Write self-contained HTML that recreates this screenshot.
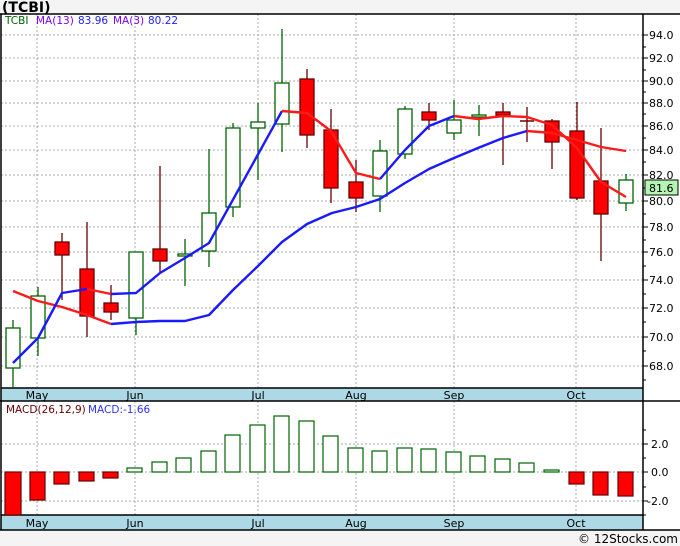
<!DOCTYPE html>
<html><head><meta charset="utf-8"><style>
html,body{margin:0;padding:0;background:#f4f4f4;}
svg{display:block;font-family:"DejaVu Sans","Liberation Sans",sans-serif;}
</style></head><body>
<svg width="680" height="546" viewBox="0 0 680 546" xmlns="http://www.w3.org/2000/svg">
<rect x="0" y="0" width="680" height="546" fill="#f4f4f4"/>
<text x="2" y="12" font-size="14" font-weight="bold" fill="#000" font-family="DejaVu Sans, sans-serif">(TCBI)</text>
<rect x="1" y="14" width="679" height="516" fill="#fff"/>
<rect x="1" y="388" width="642" height="13" fill="#add8e6"/>
<rect x="1" y="515" width="642" height="15" fill="#add8e6"/>
<g stroke="#aaa" stroke-width="1" stroke-dasharray="2,2">
<line x1="1" y1="35" x2="643" y2="35"/><line x1="1" y1="58" x2="643" y2="58"/><line x1="1" y1="81" x2="643" y2="81"/><line x1="1" y1="103" x2="643" y2="103"/><line x1="1" y1="126" x2="643" y2="126"/><line x1="1" y1="150" x2="643" y2="150"/><line x1="1" y1="175" x2="643" y2="175"/><line x1="1" y1="201" x2="643" y2="201"/><line x1="1" y1="227" x2="643" y2="227"/><line x1="1" y1="252" x2="643" y2="252"/><line x1="1" y1="280" x2="643" y2="280"/><line x1="1" y1="308" x2="643" y2="308"/><line x1="1" y1="337" x2="643" y2="337"/><line x1="1" y1="366" x2="643" y2="366"/>
<line x1="1" y1="444" x2="643" y2="444"/><line x1="1" y1="472" x2="643" y2="472"/><line x1="1" y1="501" x2="643" y2="501"/>
<line x1="37" y1="14" x2="37" y2="388"/><line x1="135" y1="14" x2="135" y2="388"/><line x1="258" y1="14" x2="258" y2="388"/><line x1="356" y1="14" x2="356" y2="388"/><line x1="454" y1="14" x2="454" y2="388"/><line x1="576" y1="14" x2="576" y2="388"/>
<line x1="37" y1="401" x2="37" y2="515"/><line x1="135" y1="401" x2="135" y2="515"/><line x1="258" y1="401" x2="258" y2="515"/><line x1="356" y1="401" x2="356" y2="515"/><line x1="454" y1="401" x2="454" y2="515"/><line x1="576" y1="401" x2="576" y2="515"/>
</g>
<g stroke="#000" stroke-width="1.5" fill="none">
<line x1="0" y1="14" x2="680" y2="14"/>
<line x1="1" y1="14" x2="1" y2="530"/>
<line x1="643" y1="14" x2="643" y2="530"/>
<line x1="1" y1="388" x2="643" y2="388"/>
<line x1="0" y1="401" x2="680" y2="401"/>
<line x1="1" y1="515" x2="643" y2="515"/>
<line x1="0" y1="530" x2="680" y2="530"/>
</g>
<g font-size="11" fill="#000" text-anchor="middle">
<text x="37" y="399">May</text><text x="135" y="399">Jun</text><text x="258" y="399">Jul</text><text x="356" y="399">Aug</text><text x="454" y="399">Sep</text><text x="576" y="399">Oct</text>
<text x="37" y="527">May</text><text x="135" y="527">Jun</text><text x="258" y="527">Jul</text><text x="356" y="527">Aug</text><text x="454" y="527">Sep</text><text x="576" y="527">Oct</text>
</g>
<g stroke="#000" stroke-width="1">
<line x1="643" y1="35" x2="648" y2="35"/><line x1="643" y1="47" x2="646" y2="47"/><line x1="643" y1="58" x2="648" y2="58"/><line x1="643" y1="70" x2="646" y2="70"/><line x1="643" y1="81" x2="648" y2="81"/><line x1="643" y1="92" x2="646" y2="92"/><line x1="643" y1="103" x2="648" y2="103"/><line x1="643" y1="114" x2="646" y2="114"/><line x1="643" y1="126" x2="648" y2="126"/><line x1="643" y1="138" x2="646" y2="138"/><line x1="643" y1="150" x2="648" y2="150"/><line x1="643" y1="162" x2="646" y2="162"/><line x1="643" y1="175" x2="648" y2="175"/><line x1="643" y1="188" x2="646" y2="188"/><line x1="643" y1="201" x2="648" y2="201"/><line x1="643" y1="214" x2="646" y2="214"/><line x1="643" y1="227" x2="648" y2="227"/><line x1="643" y1="240" x2="646" y2="240"/><line x1="643" y1="252" x2="648" y2="252"/><line x1="643" y1="266" x2="646" y2="266"/><line x1="643" y1="280" x2="648" y2="280"/><line x1="643" y1="294" x2="646" y2="294"/><line x1="643" y1="308" x2="648" y2="308"/><line x1="643" y1="322" x2="646" y2="322"/><line x1="643" y1="337" x2="648" y2="337"/><line x1="643" y1="351" x2="646" y2="351"/><line x1="643" y1="366" x2="648" y2="366"/><line x1="643" y1="380" x2="646" y2="380"/>
<line x1="643" y1="430" x2="646" y2="430"/><line x1="643" y1="444" x2="648" y2="444"/><line x1="643" y1="458" x2="646" y2="458"/><line x1="643" y1="472" x2="648" y2="472"/><line x1="643" y1="487" x2="646" y2="487"/><line x1="643" y1="501" x2="648" y2="501"/><line x1="643" y1="515" x2="646" y2="515"/>
</g>
<g font-size="11" fill="#000">
<text x="649" y="39">94.0</text><text x="649" y="62">92.0</text><text x="649" y="85">90.0</text><text x="649" y="107">88.0</text><text x="649" y="130">86.0</text><text x="649" y="154">84.0</text><text x="649" y="179">82.0</text><text x="649" y="205">80.0</text><text x="649" y="231">78.0</text><text x="649" y="256">76.0</text><text x="649" y="284">74.0</text><text x="649" y="312">72.0</text><text x="649" y="341">70.0</text><text x="649" y="370">68.0</text>
<text x="651" y="448">2.0</text><text x="651" y="476">0.0</text><text x="647" y="505">-2.0</text>
</g>
<rect x="645" y="180" width="33" height="15" fill="#b4f5b4" stroke="#000" stroke-width="1"/>
<text x="649" y="192" font-size="11" fill="#000">81.6</text>
<g font-size="10.5">
<text x="5" y="24" fill="#006400">TCBI</text>
<text x="36" y="24" fill="#7b00ff">MA(13)</text>
<text x="78" y="24" fill="#2020ff">83.96</text>
<text x="113" y="24" fill="#7b00ff">MA(3)</text>
<text x="148" y="24" fill="#2020ff">80.22</text>
<text x="6" y="413" fill="#660000">MACD(26,12,9)</text>
<text x="88" y="413" fill="#3030ff">MACD:-1.66</text>
</g>
<g stroke-width="1.3">
<g stroke="#006400">
<line x1="13" y1="320" x2="13" y2="388"/><line x1="38" y1="287" x2="38" y2="356"/><line x1="136" y1="252" x2="136" y2="335"/><line x1="185" y1="239" x2="185" y2="286"/><line x1="209" y1="149" x2="209" y2="267"/><line x1="233" y1="123" x2="233" y2="217"/><line x1="258" y1="103" x2="258" y2="180"/><line x1="282" y1="29" x2="282" y2="152"/><line x1="380" y1="140" x2="380" y2="212"/><line x1="405" y1="106" x2="405" y2="159"/><line x1="454" y1="100" x2="454" y2="140"/><line x1="479" y1="105" x2="479" y2="136"/><line x1="626" y1="174" x2="626" y2="211"/>
</g>
<g stroke="#660000">
<line x1="62" y1="233" x2="62" y2="300"/><line x1="87" y1="222" x2="87" y2="337"/><line x1="111" y1="285" x2="111" y2="320"/><line x1="160" y1="166" x2="160" y2="272"/><line x1="307" y1="69" x2="307" y2="148"/><line x1="331" y1="109" x2="331" y2="203"/><line x1="356" y1="160" x2="356" y2="212"/><line x1="429" y1="103" x2="429" y2="130"/><line x1="503" y1="103" x2="503" y2="165"/><line x1="527" y1="107" x2="527" y2="142"/><line x1="552" y1="119" x2="552" y2="169"/><line x1="577" y1="102" x2="577" y2="200"/><line x1="601" y1="128" x2="601" y2="261"/>
</g>
</g>
<g fill="#fff" stroke="#006400" stroke-width="1.3">
<rect x="6" y="328" width="14" height="40"/><rect x="31" y="296" width="14" height="42"/><rect x="129" y="252" width="14" height="66"/><rect x="178" y="254" width="14" height="2"/><rect x="202" y="213" width="14" height="38"/><rect x="226" y="128" width="14" height="79"/><rect x="251" y="122" width="14" height="6"/><rect x="275" y="83" width="14" height="41"/><rect x="373" y="151" width="14" height="45"/><rect x="398" y="109" width="14" height="45"/><rect x="447" y="120" width="14" height="13"/><rect x="472" y="115" width="14" height="2"/><rect x="619" y="180" width="14" height="23"/>
</g>
<g fill="#ff0000" stroke="#660000" stroke-width="1.3">
<rect x="55" y="242" width="14" height="13"/><rect x="80" y="269" width="14" height="47"/><rect x="104" y="303" width="14" height="9"/><rect x="153" y="249" width="14" height="12"/><rect x="300" y="79" width="14" height="56"/><rect x="324" y="130" width="14" height="58"/><rect x="349" y="182" width="14" height="16"/><rect x="422" y="112" width="14" height="8"/><rect x="496" y="112" width="14" height="3"/><rect x="545" y="121" width="14" height="21"/><rect x="570" y="131" width="14" height="67"/><rect x="594" y="181" width="14" height="33"/>
</g>
<line x1="520" y1="121" x2="534" y2="121" stroke="#660000" stroke-width="1.5"/>
<g fill="none" stroke-width="2.4" stroke-linejoin="round">
<polyline stroke="#ff1a1a" points="13,291 38,301 62,307 87,315 111,324"/>
<polyline stroke="#1a1aff" points="111,324 136,322 160,321 185,321 209,315 233,290 258,266 282,242 307,224 332,213 356,207 380,199 405,183 429,169 454,158 478,148 503,138 527,131"/>
<polyline stroke="#ff1a1a" points="527,131 552,133 577,140 601,147 626,151"/>
<polyline stroke="#1a1aff" points="13,363 38,338 62,293 87,289"/>
<polyline stroke="#ff1a1a" points="87,289 111,294"/>
<polyline stroke="#1a1aff" points="111,294 136,293 160,273 185,258 209,243 282,111"/>
<polyline stroke="#ff1a1a" points="282,111 307,113 331,131 356,173 380,179"/>
<polyline stroke="#1a1aff" points="380,179 405,150 429,126 454,116"/>
<polyline stroke="#ff1a1a" points="454,116 478,119 503,116 527,117 552,125 577,148 601,182 626,197"/>
</g>
<g fill="#ff0000" stroke="#660000" stroke-width="1.2">
<rect x="5" y="472" width="16" height="43"/><rect x="30" y="472" width="15" height="28"/><rect x="54" y="472" width="15" height="12"/><rect x="79" y="472" width="15" height="9"/><rect x="103" y="472" width="15" height="6"/><rect x="569" y="472" width="15" height="12"/><rect x="593" y="472" width="15" height="23"/><rect x="618" y="472" width="15" height="24"/>
</g>
<g fill="#fff" stroke="#006400" stroke-width="1.2">
<rect x="127" y="468" width="15" height="4"/><rect x="152" y="462" width="15" height="10"/><rect x="176" y="458" width="15" height="14"/><rect x="201" y="451" width="15" height="21"/><rect x="225" y="435" width="15" height="37"/><rect x="250" y="425" width="15" height="47"/><rect x="274" y="416" width="15" height="56"/><rect x="299" y="421" width="15" height="51"/><rect x="323" y="436" width="15" height="36"/><rect x="348" y="448" width="15" height="24"/><rect x="372" y="451" width="15" height="21"/><rect x="397" y="448" width="15" height="24"/><rect x="421" y="449" width="15" height="23"/><rect x="446" y="452" width="15" height="20"/><rect x="470" y="456" width="15" height="16"/><rect x="495" y="459" width="15" height="13"/><rect x="519" y="463" width="15" height="9"/><rect x="544" y="470" width="15" height="2"/>
</g>
<text x="678" y="543" font-size="12" fill="#000" text-anchor="end">© 12Stocks.com</text>
</svg>
</body></html>
